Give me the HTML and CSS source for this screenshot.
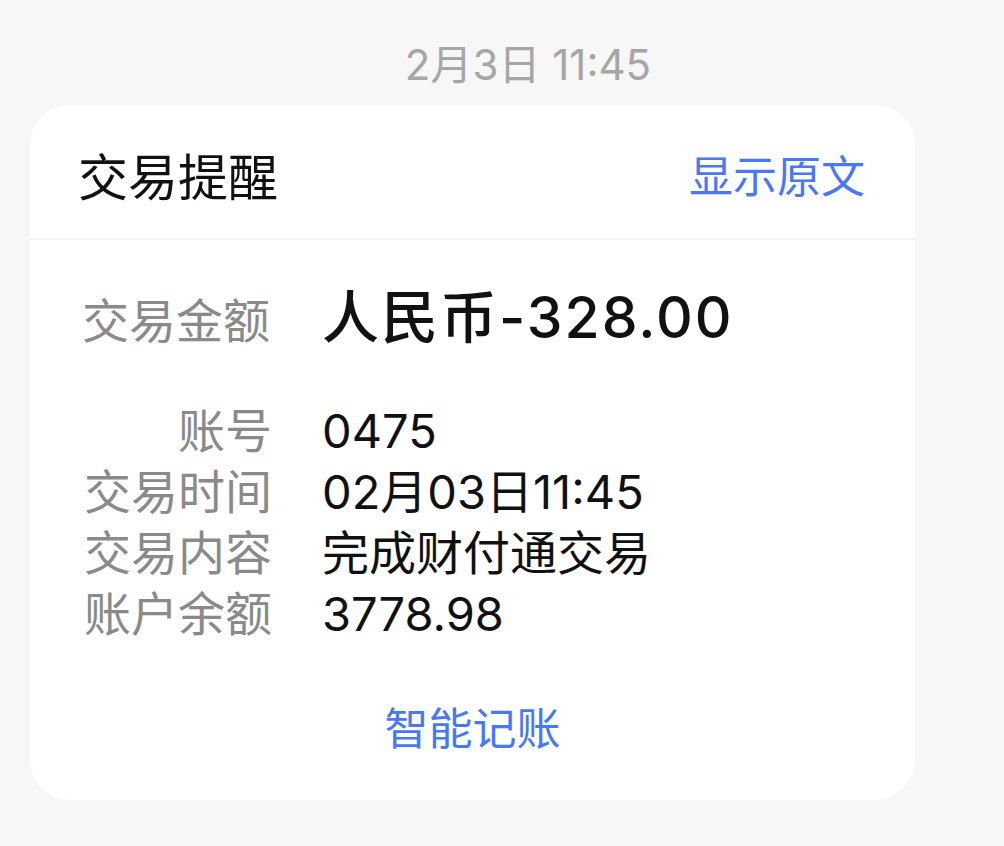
FILE: index.html
```html
<!DOCTYPE html>
<html lang="zh-CN">
<head>
    <meta charset="UTF-8">
    <meta name="viewport" content="width=device-width, initial-scale=1.0">
    <title>交易提醒</title>
    <link rel="stylesheet" href="styles.css">
</head>
<body>
    <div class="msg-time">2月3日 11:45</div>
    <div class="card">
        <div class="card-header">
            <h2 class="card-title">交易提醒</h2>
            <a class="link" href="#">显示原文</a>
        </div>
        <div class="card-body">
            <div class="amount-row">
                <span class="label">交易金额</span>
                <span class="amount">人民币-328.00</span>
            </div>
            <div class="details">
                <span class="label">账号</span>
                <span class="value">0475</span>
                <span class="label">交易时间</span>
                <span class="value">02月03日11:45</span>
                <span class="label">交易内容</span>
                <span class="value">完成财付通交易</span>
                <span class="label">账户余额</span>
                <span class="value">3778.98</span>
            </div>
        </div>
        <div class="card-footer">
            <a class="link" href="#">智能记账</a>
        </div>
    </div>
</body>
</html>
```

FILE: styles.css
```css
body {
    font-family: Inter, "Noto Sans CJK SC", sans-serif;
    margin: 0;
    padding: 0;
    background: #f7f7f7;
    color: #111;
}

.msg-time {
    padding: 35px 0 0 52px;
    height: 70px;
    line-height: 60px;
    font-size: 42px;
    color: #a6a6a6;
    text-align: center;
}

.card {
    background: #fff;
    border-radius: 40px;
    width: 885px;
    margin-left: 30px;
    overflow: hidden;
}

.card-header {
    height: 135px;
    padding: 4px 50px 0 48px;
    box-sizing: border-box;
    display: flex;
    justify-content: space-between;
    align-items: center;
    border-bottom: 2px solid #f4f4f4;
}

.card-title {
    margin: 0;
    font-size: 50px;
    font-weight: normal;
    color: #111;
}

.link {
    color: #4a78f5;
    font-size: 44px;
    text-decoration: none;
}

.card-body {
    padding: 38px 0 0 52px;
}

.label {
    color: #8a8a8a;
    font-size: 47px;
    text-align: right;
}

.amount-row {
    display: flex;
    align-items: baseline;
    gap: 52px;
    height: 80px;
    line-height: 80px;
}

.amount {
    font-size: 57px;
    font-weight: 500;
    letter-spacing: 2px;
    color: #111;
}

.details {
    margin-top: 42px;
    display: grid;
    grid-template-columns: 190px auto;
    column-gap: 50px;
    line-height: 61px;
}

.value {
    font-size: 47px;
    color: #111;
}

.card-footer {
    text-align: center;
    padding: 55px 0 30px 0;
    line-height: 61px;
}
```
